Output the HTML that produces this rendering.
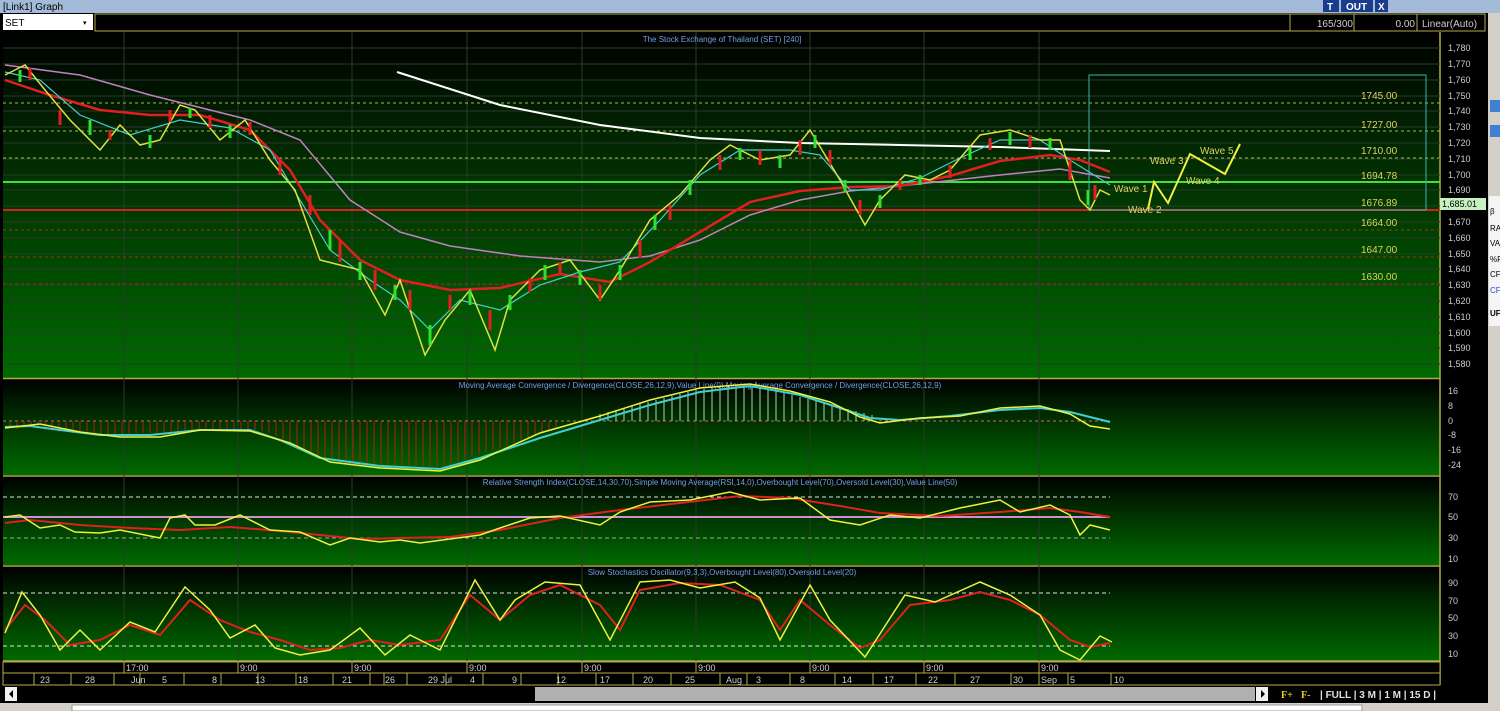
<!DOCTYPE html>
<html><head><style>
body{margin:0;width:1500px;height:711px;overflow:hidden;background:#d4d0c8;font-family:"Liberation Sans",sans-serif}
svg{position:absolute;left:0;top:0}
</style></head><body>
<svg width="1500" height="711" viewBox="0 0 1500 711" font-family="Liberation Sans, sans-serif">
<defs>
<linearGradient id="g" x1="0" y1="0" x2="0" y2="1"><stop offset="0" stop-color="#000"/><stop offset="0.3" stop-color="#012401"/><stop offset="1" stop-color="#006a00"/></linearGradient>
</defs>
<rect x="0" y="0" width="1500" height="13" fill="#a3bbd9"/>
<text x="3" y="10" font-size="10" fill="#000">[Link1] Graph</text>
<rect x="1323" y="0" width="16" height="12" fill="#1a3c8c"/><text x="1327" y="10" font-size="10" fill="#fff" font-weight="bold">T</text>
<rect x="1341" y="0" width="32" height="12" fill="#1a3c8c"/><text x="1346" y="10" font-size="10" fill="#fff" font-weight="bold">OUT</text>
<rect x="1375" y="0" width="13" height="12" fill="#1a3c8c"/><text x="1378" y="10" font-size="10" fill="#fff" font-weight="bold">X</text>
<rect x="0" y="13" width="1488" height="698" fill="#000"/>
<rect x="3" y="14" width="90" height="16" fill="#fff"/><text x="5" y="26" font-size="10" fill="#000">SET</text><text x="83" y="25" font-size="7">▾</text>
<rect x="95" y="14" width="1390" height="17" fill="#000" stroke="#b6a84a"/>
<line x1="1290" y1="14" x2="1290" y2="31" stroke="#b6a84a"/><line x1="1354" y1="14" x2="1354" y2="31" stroke="#b6a84a"/><line x1="1417" y1="14" x2="1417" y2="31" stroke="#b6a84a"/>
<text x="1353" y="27" font-size="10" fill="#ccc" text-anchor="end">165/300</text>
<text x="1415" y="27" font-size="10" fill="#ccc" text-anchor="end">0.00</text>
<text x="1422" y="27" font-size="10" fill="#ccc">Linear(Auto)</text>
<rect x="3" y="32" width="1437" height="346" fill="url(#g)"/>
<rect x="3" y="380" width="1437" height="95" fill="url(#g)"/>
<rect x="3" y="477" width="1437" height="88" fill="url(#g)"/>
<rect x="3" y="567" width="1437" height="94" fill="url(#g)"/>
<g stroke="#b6a84a" stroke-width="1.5"><line x1="3" y1="378.5" x2="1440" y2="378.5"/><line x1="3" y1="476" x2="1440" y2="476"/><line x1="3" y1="566" x2="1440" y2="566"/><line x1="3" y1="661" x2="1440" y2="661"/><line x1="1440" y1="32" x2="1440" y2="685"/></g>
<g stroke="#2c3a2c" stroke-width="1">
<line x1="124" y1="32" x2="124" y2="661"/><line x1="238" y1="32" x2="238" y2="661"/><line x1="352" y1="32" x2="352" y2="661"/><line x1="467" y1="32" x2="467" y2="661"/><line x1="582" y1="32" x2="582" y2="661"/><line x1="696" y1="32" x2="696" y2="661"/><line x1="810" y1="32" x2="810" y2="661"/><line x1="924" y1="32" x2="924" y2="661"/><line x1="1039" y1="32" x2="1039" y2="661"/>
<path d="M3 48H1440M3 64H1440M3 80H1440M3 96H1440M3 111H1440M3 127H1440M3 143H1440M3 159H1440M3 175H1440M3 190H1440M3 206H1440M3 222H1440M3 238H1440M3 254H1440M3 269H1440M3 285H1440M3 301H1440M3 317H1440M3 333H1440M3 348H1440M3 364H1440"/>
</g>
<text x="722" y="42" font-size="8" fill="#6fa0e0" text-anchor="middle">The Stock Exchange of Thailand (SET) [240]</text>
<g stroke-dasharray="3,3" stroke-width="1"><line x1="3" y1="103" x2="1440" y2="103" stroke="#a0c040"/><line x1="3" y1="131" x2="1440" y2="131" stroke="#a0c040"/><line x1="3" y1="158" x2="1440" y2="158" stroke="#a0c040"/><line x1="3" y1="230" x2="1440" y2="230" stroke="#a03020"/><line x1="3" y1="257" x2="1440" y2="257" stroke="#a03020"/><line x1="3" y1="284" x2="1440" y2="284" stroke="#a03020"/></g>
<line x1="3" y1="182" x2="1440" y2="182" stroke="#40e040" stroke-width="2"/>
<line x1="3" y1="210" x2="1440" y2="210" stroke="#d02020" stroke-width="2"/>
<rect x="1089" y="75" width="337" height="135" fill="none" stroke="#40b0b0" stroke-width="1"/>
<g font-size="10" fill="#e0d060"><text x="1361" y="99">1745.00</text><text x="1361" y="128">1727.00</text><text x="1361" y="154">1710.00</text><text x="1361" y="179">1694.78</text><text x="1361" y="206">1676.89</text><text x="1361" y="226">1664.00</text><text x="1361" y="253">1647.00</text><text x="1361" y="280">1630.00</text>
<text x="1114" y="192">Wave 1</text><text x="1128" y="213">Wave 2</text><text x="1150" y="164">Wave 3</text><text x="1186" y="184">Wave 4</text><text x="1200" y="154">Wave 5</text></g>
<polyline points="1148,209 1154,182 1168,203 1190,154 1225,174 1240,144" fill="none" stroke="#f0f040" stroke-width="2"/>
<polyline points="397,72 500,105 600,125 700,138 800,143 900,145 1000,147 1110,151" fill="none" stroke="#fff" stroke-width="2"/>
<polyline points="5,65 80,75 150,95 250,120 300,140 350,200 400,232 450,246 520,256 600,262 650,256 700,240 750,215 800,200 850,191 900,186 1000,175 1060,169 1110,178" fill="none" stroke="#c080c0" stroke-width="1.5"/>
<polyline points="5,80 50,95 100,110 150,115 200,115 250,130 290,170 320,220 360,260 400,280 450,290 500,288 560,274 610,282 650,262 700,232 750,202 800,191 850,187 900,186 950,176 1000,161 1050,155 1080,160 1110,172" fill="none" stroke="#e02020" stroke-width="2.5"/>
<polyline points="5,72 40,80 80,115 130,135 180,120 230,128 270,150 300,200 330,250 370,280 400,300 430,330 460,300 500,310 540,285 580,272 620,262 660,220 700,175 740,150 790,150 820,155 850,190 880,190 920,178 960,158 1000,140 1040,140 1070,160 1110,185" fill="none" stroke="#40d0d0" stroke-width="1.2"/>
<polyline points="5,75 25,65 45,90 70,120 100,150 120,125 140,145 160,140 180,105 195,110 220,140 245,120 270,160 295,190 320,260 340,265 360,270 385,315 400,280 425,355 445,320 470,290 495,350 510,300 540,270 570,260 600,300 620,270 650,220 680,195 710,160 730,145 760,160 790,155 810,130 840,180 865,225 880,200 905,175 930,180 950,170 980,135 1010,130 1040,140 1060,140 1080,200 1090,210 1100,190 1110,195" fill="none" stroke="#e0e040" stroke-width="1.5"/>
<g stroke-width="3"><path d="M30 68V80M60 110V125M110 130V140M170 110V122M210 115V128M250 122V135M280 160V175M310 195V215M340 240V262M375 270V290M410 290V310M450 295V310M490 310V330M530 278V292M560 262V275M600 285V300M640 240V258M670 205V220M720 155V170M760 150V165M800 140V155M830 150V165M860 200V215M900 180V190M950 165V178M990 138V150M1030 135V148M1070 160V180M1095 185V200" stroke="#e02020"/>
<path d="M20 70V82M90 120V135M150 135V148M190 108V118M230 125V138M330 230V250M360 262V280M395 285V300M430 325V345M470 290V305M510 295V310M545 265V280M580 270V285M620 265V280M655 215V230M690 180V195M740 148V160M780 155V168M815 135V148M845 180V192M880 195V208M920 175V185M970 148V160M1010 132V145M1050 138V150M1088 190V205" stroke="#30e030"/></g>
<text x="700" y="388" font-size="8" fill="#6fa0e0" text-anchor="middle">Moving Average Convergence / Divergence(CLOSE,26,12,9),Value Line(0),Moving Average Convergence / Divergence(CLOSE,26,12,9)</text>
<line x1="3" y1="421" x2="1110" y2="421" stroke="#c07070" stroke-dasharray="3,3"/>
<path d="M10 421V428M17 421V429M24 421V427M31 421V426M38 421V428M45 421V430M52 421V431M59 421V432M66 421V432M73 421V433M80 421V433M87 421V434M94 421V434M101 421V434M108 421V434M115 421V434M122 421V434M129 421V434M136 421V433M143 421V433M150 421V433M157 421V433M164 421V433M171 421V432M178 421V432M185 421V431M192 421V430M199 421V430M206 421V429M213 421V429M220 421V429M227 421V429M234 421V429M241 421V429M248 421V430M255 421V430M262 421V431M269 421V433M276 421V436M283 421V440M290 421V444M297 421V448M304 421V451M311 421V454M318 421V456M325 421V458M332 421V460M339 421V462M346 421V463M353 421V464M360 421V465M367 421V466M374 421V466M381 421V467M388 421V467M395 421V468M402 421V468M409 421V468M416 421V469M423 421V469M430 421V470M437 421V469M444 421V467M451 421V465M458 421V462M465 421V459M472 421V457M479 421V455M486 421V452M493 421V450M500 421V448M507 421V445M514 421V443M521 421V441M528 421V438M535 421V436M542 421V433M549 421V430M556 421V427" stroke="#b02010" stroke-width="1"/>
<path d="M600 421V414M608 421V412M616 421V410M624 421V408M632 421V406M640 421V404M648 421V402M656 421V400M664 421V398M672 421V396M680 421V394M688 421V392M696 421V390M704 421V389M712 421V388M720 421V387M728 421V386M736 421V385M744 421V385M752 421V386M760 421V387M768 421V389M776 421V391M784 421V393M792 421V395M800 421V397M808 421V399M816 421V401M824 421V403M832 421V405M840 421V407M848 421V409M856 421V411M864 421V413M872 421V415" stroke="#a0e0a0" stroke-width="1"/>
<polyline points="5,427 30,426 60,430 100,435 150,435 200,430 250,430 280,440 320,458 380,466 440,469 480,458 540,438 600,420 650,405 700,392 750,386 800,395 840,408 870,418 900,420 950,416 1000,410 1040,408 1070,412 1110,422" fill="none" stroke="#40d0d0" stroke-width="2"/>
<polyline points="5,428 40,424 80,432 120,437 160,437 200,430 250,431 290,443 330,462 380,468 440,471 480,460 540,433 600,416 650,400 700,388 750,384 790,391 830,402 860,417 880,423 920,418 960,416 1000,408 1040,406 1070,414 1090,426 1110,429" fill="none" stroke="#f0f040" stroke-width="1.5"/>
<text x="720" y="485" font-size="8" fill="#6fa0e0" text-anchor="middle">Relative Strength Index(CLOSE,14,30,70),Simple Moving Average(RSI,14,0),Overbought Level(70),Oversold Level(30),Value Line(50)</text>
<line x1="3" y1="497" x2="1110" y2="497" stroke="#e0e0e0" stroke-dasharray="4,3"/>
<line x1="3" y1="538" x2="1110" y2="538" stroke="#a0a0a0" stroke-dasharray="4,3"/>
<line x1="3" y1="517" x2="1110" y2="517" stroke="#d090d0" stroke-width="2"/>
<polyline points="5,523 30,520 80,525 130,528 180,530 230,527 280,531 320,535 360,539 400,538 450,537 500,530 560,518 620,510 680,503 740,496 790,498 840,506 880,513 940,516 1000,512 1050,508 1080,512 1110,517" fill="none" stroke="#e02020" stroke-width="2"/>
<polyline points="5,517 20,515 40,528 60,525 75,532 100,533 120,530 160,538 170,518 185,515 195,525 215,525 240,515 270,530 300,532 330,545 350,538 380,542 400,540 420,543 450,539 480,535 500,528 530,518 560,516 600,525 620,512 650,502 690,500 730,492 760,500 800,498 830,520 860,525 890,515 920,518 960,508 1000,500 1020,512 1050,505 1070,515 1080,535 1090,525 1110,530" fill="none" stroke="#f0f040" stroke-width="1.5"/>
<text x="722" y="575" font-size="8" fill="#6fa0e0" text-anchor="middle">Slow Stochastics Oscillator(9,3,3),Overbought Level(80),Oversold Level(20)</text>
<line x1="3" y1="593" x2="1110" y2="593" stroke="#e0e0e0" stroke-dasharray="4,3"/>
<line x1="3" y1="646" x2="1110" y2="646" stroke="#e0e0e0" stroke-dasharray="4,3"/>
<polyline points="5,630 25,605 45,620 70,645 100,640 130,625 160,635 190,600 220,620 250,632 280,640 310,650 340,648 370,640 400,645 440,640 470,595 500,620 530,595 560,585 600,605 620,630 640,590 680,583 720,585 760,600 780,630 800,600 830,625 860,648 880,640 910,605 950,600 980,592 1010,600 1040,615 1070,640 1090,647 1110,643" fill="none" stroke="#e02020" stroke-width="2"/>
<polyline points="5,633 22,592 40,615 60,650 80,630 100,650 130,622 155,632 185,587 210,610 230,638 255,625 275,648 300,655 330,650 360,628 385,655 410,635 440,650 475,580 500,620 515,600 545,582 580,585 610,640 640,582 670,580 700,588 735,582 760,598 780,640 810,585 830,620 865,657 905,595 935,602 980,582 1010,595 1040,615 1060,650 1080,660 1100,636 1112,642" fill="none" stroke="#f0f040" stroke-width="1.5"/>
<g font-size="9" fill="#ccc">
<text x="1448" y="51">1,780</text><text x="1448" y="67">1,770</text><text x="1448" y="83">1,760</text><text x="1448" y="99">1,750</text><text x="1448" y="114">1,740</text><text x="1448" y="130">1,730</text><text x="1448" y="146">1,720</text><text x="1448" y="162">1,710</text><text x="1448" y="178">1,700</text><text x="1448" y="193">1,690</text><text x="1448" y="225">1,670</text><text x="1448" y="241">1,660</text><text x="1448" y="257">1,650</text><text x="1448" y="272">1,640</text><text x="1448" y="288">1,630</text><text x="1448" y="304">1,620</text><text x="1448" y="320">1,610</text><text x="1448" y="336">1,600</text><text x="1448" y="351">1,590</text><text x="1448" y="367">1,580</text>
<text x="1448" y="394">16</text><text x="1448" y="409">8</text><text x="1448" y="424">0</text><text x="1448" y="438">-8</text><text x="1448" y="453">-16</text><text x="1448" y="468">-24</text>
<text x="1448" y="500">70</text><text x="1448" y="520">50</text><text x="1448" y="541">30</text><text x="1448" y="562">10</text>
<text x="1448" y="586">90</text><text x="1448" y="604">70</text><text x="1448" y="621">50</text><text x="1448" y="639">30</text><text x="1448" y="657">10</text></g>
<rect x="1440" y="198" width="46" height="12" fill="#c8f0c0"/><text x="1442" y="207" font-size="9" fill="#000">1,685.01</text>
<rect x="3" y="662" width="1437" height="23" fill="#000" stroke="#b6a84a"/>
<line x1="3" y1="673" x2="1440" y2="673" stroke="#b6a84a"/>
<g stroke="#b6a84a"><path d="M124 662V673M238 662V673M352 662V673M467 662V673M582 662V673M696 662V673M810 662V673M924 662V673M1039 662V673M34 673V685M71 673V685M114 673V685M140 673V685M184 673V685M221 673V685M258 673V685M296 673V685M333 673V685M370 673V685M384 673V685M407 673V685M446 673V685M483 673V685M521 673V685M558 673V685M596 673V685M633 673V685M671 673V685M720 673V685M747 673V685M790 673V685M835 673V685M873 673V685M916 673V685M955 673V685M1011 673V685M1039 673V685M1068 673V685M1111 673V685"/></g>
<g font-size="9" fill="#ccc"><text x="126" y="671">17:00</text><text x="240" y="671">9:00</text><text x="354" y="671">9:00</text><text x="469" y="671">9:00</text><text x="584" y="671">9:00</text><text x="698" y="671">9:00</text><text x="812" y="671">9:00</text><text x="926" y="671">9:00</text><text x="1041" y="671">9:00</text>
<text x="40" y="683">23</text><text x="85" y="683">28</text><text x="131" y="683">Jun</text><text x="162" y="683">5</text><text x="212" y="683">8</text><text x="255" y="683">13</text><text x="298" y="683">18</text><text x="342" y="683">21</text><text x="385" y="683">26</text><text x="428" y="683">29 Jul</text><text x="470" y="683">4</text><text x="512" y="683">9</text><text x="556" y="683">12</text><text x="600" y="683">17</text><text x="643" y="683">20</text><text x="685" y="683">25</text><text x="726" y="683">Aug</text><text x="756" y="683">3</text><text x="800" y="683">8</text><text x="842" y="683">14</text><text x="884" y="683">17</text><text x="928" y="683">22</text><text x="970" y="683">27</text><text x="1013" y="683">30</text><text x="1041" y="683">Sep</text><text x="1070" y="683">5</text><text x="1114" y="683">10</text></g>
<rect x="3" y="686" width="1268" height="16" fill="#000"/>
<rect x="5" y="687" width="12" height="14" fill="#f0f0f0"/><path d="M13 690L9 694L13 698Z" fill="#000"/>
<rect x="535" y="687" width="720" height="14" fill="#b0b0b0"/>
<rect x="1256" y="687" width="12" height="14" fill="#f0f0f0"/><path d="M1261 690L1265 694L1261 698Z" fill="#000"/>
<g font-size="10" fill="#e0e0e0" font-weight="bold"><text x="1281" y="698" fill="#e8d020" font-family="Liberation Serif">F+</text><text x="1301" y="698" fill="#e8d020" font-family="Liberation Serif">F-</text><text x="1320" y="698">|  FULL   |  3 M   |  1 M   |  15 D  |</text></g>
<rect x="0" y="703" width="1488" height="8" fill="#d4d0c8"/>
<rect x="72" y="705" width="1290" height="6" fill="#fff" stroke="#999"/>
<rect x="1488" y="13" width="12" height="698" fill="#d4d0c8"/>
<rect x="1489" y="196" width="11" height="130" fill="#f4f4f4"/>
<rect x="1490" y="100" width="10" height="12" fill="#4080d0"/><rect x="1490" y="125" width="10" height="12" fill="#4080d0"/>
<g font-size="8" fill="#000"><text x="1490" y="214">β</text><text x="1490" y="231">RA</text><text x="1490" y="246">VA</text><text x="1490" y="262">%F</text><text x="1490" y="277">CF</text><text x="1490" y="293" fill="#2050d0">CF</text><text x="1490" y="316" font-weight="bold">UF</text></g>
</svg>
</body></html>
